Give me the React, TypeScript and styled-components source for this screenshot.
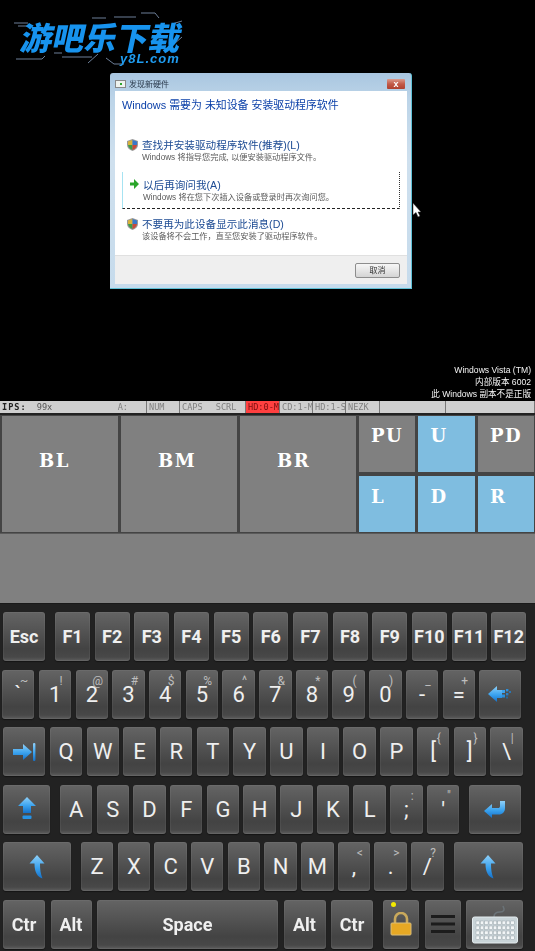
import { styled, createGlobalStyle } from 'styled-components';

const GlobalStyle = createGlobalStyle`
  html, body {
    margin: 0;
    padding: 0;
    background: #000;
  }
  * {
    box-sizing: border-box;
  }
`;

const cjk = `"Liberation Sans", "Noto Sans CJK SC", sans-serif`;

const Page = styled.div`
  width: 535px;
  height: 951px;
  display: flex;
  flex-direction: column;
  overflow: hidden;
  background: #000;
`;

/* ---------- emulated desktop ---------- */

const Desktop = styled.div`
  position: relative;
  height: 401px;
  flex-shrink: 0;
  display: flex;
  justify-content: flex-end;
  align-items: flex-end;
  padding: 0 4px 1px 0;
  background: #000;
`;

const Logo = styled.div`
  position: absolute;
  left: 14px;
  top: 12px;
  width: 176px;
  height: 54px;
  filter: blur(0.4px);
`;

const LogoLines = styled.svg`
  position: absolute;
  left: 0;
  top: 0;
`;

const LogoTitle = styled.div`
  position: absolute;
  left: 8px;
  top: 2px;
  font-family: "Noto Sans CJK SC", sans-serif;
  font-size: 32px;
  line-height: 44px;
  font-weight: 900;
  white-space: nowrap;
  color: #1793ee;
  transform: skewX(-12deg);
`;

const LogoDomain = styled.div`
  position: absolute;
  left: 106px;
  top: 40px;
  font-family: "Liberation Sans", sans-serif;
  font-size: 13px;
  line-height: 13px;
  font-weight: 700;
  font-style: italic;
  letter-spacing: 1px;
  color: #1f9cf0;
`;

const Dialog = styled.div`
  position: absolute;
  left: 110px;
  top: 73px;
  width: 302px;
  height: 216px;
  display: flex;
  flex-direction: column;
  padding: 0 4px 4px 5px;
  background: linear-gradient(180deg, #a9c6e0 0%, #bcd4e8 12%, #cfe0ee 40%, #c6dbec 100%);
  border-right: 1px solid #5fc0d6;
  border-bottom: 1px solid #5fc0d6;
  border-radius: 3px 3px 0 0;
  filter: blur(0.6px);
  font-family: ${cjk};
`;

const TitleBar = styled.div`
  height: 18px;
  flex-shrink: 0;
  display: flex;
  align-items: center;
  padding-top: 3px;
`;

const TitleIcon = styled.div`
  width: 11px;
  height: 8px;
  margin-right: 3px;
  border: 1px solid #888;
  background: #eef2ee;
  display: flex;
  align-items: center;
  justify-content: center;

  &::after {
    content: '';
    width: 2px;
    height: 2px;
    background: #2da52d;
  }
`;

const TitleText = styled.span`
  flex: 1;
  font-size: 8px;
  color: #2b3a4c;
`;

const CloseButton = styled.div`
  width: 18px;
  height: 10px;
  margin-right: 2px;
  border-radius: 1px;
  background: linear-gradient(180deg, #dc9a8c 0%, #c25a48 50%, #b0412f 100%);
  color: #fff;
  font-size: 9px;
  line-height: 10px;
  font-weight: 700;
  text-align: center;
`;

const DialogBody = styled.div`
  flex: 1;
  display: flex;
  flex-direction: column;
  background: #fff;
`;

const Heading = styled.div`
  height: 41px;
  flex-shrink: 0;
  padding: 7px 0 0 7px;
  font-size: 10.9px;
  line-height: 14px;
  color: #0a3fa8;
  white-space: nowrap;
`;

const OptionList = styled.div`
  flex: 1;
  display: flex;
  flex-direction: column;
  gap: 2.5px;
  padding-left: 7px;
`;

const Option = styled.div<{ $focused?: boolean }>`
  width: 278px;
  height: 37px;
  display: flex;
  align-items: flex-start;
  padding: 6px 0 0 ${(p) => (p.$focused ? '7px' : '4px')};
  border-left: 1px solid ${(p) => (p.$focused ? '#a6e3f2' : 'transparent')};
  border-right: 1px dotted ${(p) => (p.$focused ? '#333' : 'transparent')};
  border-bottom: 1px dashed ${(p) => (p.$focused ? '#222' : 'transparent')};
`;

const OptionIcon = styled.svg`
  flex-shrink: 0;
  margin: 1px 4px 0 0;
`;

const OptionText = styled.div`
  display: flex;
  flex-direction: column;
`;

const OptionTitle = styled.div`
  font-size: 10.6px;
  line-height: 14px;
  color: #1b4a93;
  white-space: nowrap;
`;

const OptionSub = styled.div`
  font-size: 8.2px;
  line-height: 12px;
  color: #5a5a5a;
  white-space: nowrap;
`;

const DialogFooter = styled.div`
  height: 29px;
  flex-shrink: 0;
  display: flex;
  justify-content: flex-end;
  align-items: center;
  padding: 0 7px 0 0;
  background: #efefef;
  border-top: 1px solid #e0e0e0;
`;

const CancelButton = styled.div`
  width: 45px;
  height: 15px;
  border: 1px solid #8d8d8d;
  border-radius: 2px;
  background: linear-gradient(180deg, #f6f6f6 0%, #e6e6e6 50%, #d4d4d4 100%);
  font-size: 8px;
  line-height: 13px;
  color: #333;
  text-align: center;
`;

const Cursor = styled.svg`
  position: absolute;
  left: 412px;
  top: 203px;
`;

const Watermark = styled.div`
  display: flex;
  flex-direction: column;
  align-items: flex-end;
  font-family: ${cjk};
  font-size: 8.6px;
  line-height: 12px;
  color: #f4f4f4;
  filter: blur(0.3px);
`;

/* ---------- emulator status bar ---------- */

const StatusBar = styled.div`
  height: 14px;
  flex-shrink: 0;
  display: flex;
  background: #cfcfcf;
  border-bottom: 2px solid #222;
  font-family: "DejaVu Sans Mono", monospace;
  font-size: 8.6px;
  line-height: 12px;
  color: #808080;
  white-space: nowrap;
  filter: blur(0.25px);
`;

const StatusCell = styled.div<{ $w: number; $active?: boolean }>`
  width: ${(p) => p.$w}px;
  flex-shrink: 0;
  display: flex;
  gap: 13px;
  padding: 0 2px;
  overflow: hidden;
  border-right: 1px solid #777;
  background: ${(p) => (p.$active ? '#ff4040' : 'transparent')};
  color: ${(p) => (p.$active ? '#7a1010' : '#808080')};
`;

const StatusStrong = styled.b`
  color: #222;
  letter-spacing: 1px;
`;

const StatusFps = styled.span`
  color: #555;
  margin-left: -3px;
  flex: 1;
`;

const StatusSpacer = styled.span`
  margin-right: 16px;
`;

/* ---------- on screen mouse and arrow pad ---------- */

const PadPanel = styled.div`
  height: 118px;
  flex-shrink: 0;
  display: flex;
  gap: 3px;
  padding: 1px 1px 1px 2px;
  background: #444;
`;

const PadKey = styled.div<{ $blue?: boolean; $big?: boolean; $row2?: boolean }>`
  width: ${(p) => (p.$big ? '116px' : 'auto')};
  background: ${(p) => (p.$blue ? '#7fbde0' : '#808080')};
  padding: ${(p) => (p.$big ? '34px 0 0 37px' : p.$row2 ? '10px 0 0 12px' : '9px 0 0 12px')};
  font-family: "DejaVu Serif", serif;
  font-weight: 700;
  font-size: 18px;
  line-height: 22px;
  letter-spacing: 1.5px;
  color: #fff;
`;

const PadGrid = styled.div`
  flex: 1;
  display: grid;
  grid-template-columns: repeat(3, 1fr);
  grid-template-rows: repeat(2, 1fr);
  gap: 4px 3.4px;
`;

const Filler = styled.div`
  height: 70px;
  flex-shrink: 0;
  background: #808080;
  border-top: 1px solid #5a5a5a;
`;

/* ---------- keyboard ---------- */

const Keyboard = styled.div`
  flex: 1;
  display: flex;
  flex-direction: column;
  gap: 8.5px;
  padding-top: 8px;
  background: #222;
  border-top: 1px solid #1a1a1a;
  filter: blur(0.3px);
`;

const KeyRow = styled.div<{ $gap: number; $left: number }>`
  height: 49px;
  flex-shrink: 0;
  display: flex;
  gap: ${(p) => p.$gap}px;
  padding-left: ${(p) => p.$left}px;
`;

const KeyCap = styled.div<{ $w: number; $ml?: number; $bold?: boolean }>`
  position: relative;
  width: ${(p) => p.$w}px;
  margin-left: ${(p) => p.$ml ?? 0}px;
  flex-shrink: 0;
  display: flex;
  align-items: center;
  justify-content: center;
  border-radius: 3px;
  background: linear-gradient(180deg, #646464 0%, #555 35%, #434343 75%, #484848 92%, #5e5e5e 100%);
  box-shadow: inset 0 0 0 1px rgba(255, 255, 255, 0.05), 0 1px 1px #141414;
  font-family: Roboto, sans-serif;
  font-size: ${(p) => (p.$bold ? 18 : 22)}px;
  font-weight: ${(p) => (p.$bold ? 700 : 400)};
  color: #efefef;
`;

const KeySup = styled.span`
  position: absolute;
  left: 22px;
  top: 3px;
  transform: translateX(-50%);
  font-size: 12px;
  line-height: 16px;
  font-weight: 400;
  color: #bdbdbd;
`;

const KeyDot = styled.span`
  position: absolute;
  left: 8px;
  top: 2px;
  width: 5px;
  height: 5px;
  border-radius: 50%;
  background: #f4ea00;
`;

const BlueDefs = () => (
  <svg width="0" height="0" style={{ position: 'absolute' }}>
    <defs>
      <linearGradient id="keyBlue" x1="0" y1="0" x2="0" y2="1">
        <stop offset="0" stopColor="#8fd0f8" />
        <stop offset="0.55" stopColor="#3aa2ee" />
        <stop offset="1" stopColor="#1570c8" />
      </linearGradient>
    </defs>
  </svg>
);

const TabIcon = () => (
  <svg width="24" height="18" viewBox="0 0 24 18">
    <path d="M1 6h10V1l9 8-9 8v-5H1z" fill="url(#keyBlue)" />
    <rect x="21" y="0" width="2.4" height="18" rx="1" fill="url(#keyBlue)" />
  </svg>
);

const BackIcon = () => (
  <svg width="24" height="18" viewBox="0 0 24 18">
    <path d="M0 9l9-8v4h5v8H9v4z" fill="url(#keyBlue)" />
    <rect x="14" y="5" width="3" height="3" fill="#3aa2ee" />
    <rect x="14" y="9.5" width="3" height="3" fill="#2a8fdc" />
    <rect x="18" y="4" width="2.4" height="2.4" fill="#2f8fd8" />
    <rect x="18" y="8" width="2.4" height="2.4" fill="#2a80c8" />
    <rect x="21" y="6" width="2" height="2" fill="#2a76b4" />
    <rect x="18" y="11.5" width="2" height="2" fill="#25699e" />
  </svg>
);

const CapsIcon = () => (
  <svg width="20" height="24" viewBox="0 0 20 24">
    <path d="M10 0l9 9h-5v7H6V9H1z" fill="url(#keyBlue)" />
    <rect x="5.5" y="18.5" width="9" height="3.4" rx="1" fill="#2793e6" />
  </svg>
);

const EnterIcon = () => (
  <svg width="22" height="18" viewBox="0 0 22 18">
    <path d="M0 11l8-7v4h6c1.4 0 2-.6 2-2V1h5v7c0 4-2.4 6.5-6.4 6.5H8V18z" fill="url(#keyBlue)" />
  </svg>
);

const ShiftIcon = () => (
  <svg width="16" height="24" viewBox="0 0 16 24">
    <path d="M8 0l7.5 8.5H11c0 6 .6 10 2.5 15-5-1.500-8-6-8-15H.5z" fill="url(#keyBlue)" />
  </svg>
);

const LockIcon = () => (
  <svg width="22" height="24" viewBox="0 0 22 24">
    <path d="M5 12V7a6 6 0 0 1 12 0v5" fill="none" stroke="#c9a95c" strokeWidth="2.6" />
    <rect x="1" y="11" width="20" height="12" rx="1" fill="#e6a824" stroke="#d9bd78" />
  </svg>
);

const MenuIcon = () => (
  <svg width="24" height="19" viewBox="0 0 24 19">
    <rect x="0" y="0" width="24" height="3" fill="#1c1c1c" />
    <rect x="0" y="7.500" width="24" height="3" fill="#1c1c1c" />
    <rect x="0" y="15" width="24" height="3" fill="#1c1c1c" />
  </svg>
);

const KeyboardIcon = () => (
  <svg width="46" height="40" viewBox="0 0 46 40">
    <path d="M22 13c0-4 2-5 6-5s5-2 3-6" fill="none" stroke="#6b7378" strokeWidth="1.6" />
    <rect x="0.500" y="13" width="45" height="26" rx="2" fill="#c9d4d8" stroke="#e4ecef" />
    {[17, 22, 27, 32].map((y) =>
      Array.from({ length: 9 }).map((_, i) => (
        <rect key={`${y}-${i}`} x={4 + i * 4.35} y={y} width="3.400" height="3.400" fill="#f2f6f7" stroke="#8f9ba1" strokeWidth="0.4" />
      )),
    )}
  </svg>
);

const ShieldIcon = () => (
  <OptionIcon width="11" height="12" viewBox="0 0 11 12">
    <path d="M5.500 0L11 2v4c0 3-2.500 5-5.500 6C2.500 11 0 9 0 6V2z" fill="#9a9a9a" />
    <path d="M5.500 1v5H1V2.500z" fill="#d8b23a" />
    <path d="M5.500 1l4.500 1.500V6H5.500z" fill="#3a78c8" />
    <path d="M1 6h4.500v5C3 10 1.500 8.500 1 6z" fill="#3f9c48" />
    <path d="M5.500 6H10c-.5 2.500-2 4-4.500 5z" fill="#c94a3a" />
  </OptionIcon>
);

const GreenArrow = () => (
  <OptionIcon width="9" height="10" viewBox="0 0 9 10">
    <path d="M0 3.500h4V0l5 5-5 5V6.500H0z" fill="#2aa52a" />
  </OptionIcon>
);

type KeyDef = { label: string; sup?: string };

const fnKeys = ['F1', 'F2', 'F3', 'F4', 'F5', 'F6', 'F7', 'F8', 'F9', 'F10', 'F11', 'F12'];

const numberRow: KeyDef[] = [
  { label: '1', sup: '!' },
  { label: '2', sup: '@' },
  { label: '3', sup: '#' },
  { label: '4', sup: '$' },
  { label: '5', sup: '%' },
  { label: '6', sup: '^' },
  { label: '7', sup: '&' },
  { label: '8', sup: '*' },
  { label: '9', sup: '(' },
  { label: '0', sup: ')' },
  { label: '-', sup: '_' },
  { label: '=', sup: '+' },
];

const qwertyRow: KeyDef[] = [
  ...'QWERTYUIOP'.split('').map((label) => ({ label })),
  { label: '[', sup: '{' },
  { label: ']', sup: '}' },
  { label: '\\', sup: '|' },
];

const homeRow: KeyDef[] = [
  ...'ASDFGHJKL'.split('').map((label) => ({ label })),
  { label: ';', sup: ':' },
  { label: "'", sup: '"' },
];

const bottomRow: KeyDef[] = [
  ...'ZXCVBNM'.split('').map((label) => ({ label })),
  { label: ',', sup: '<' },
  { label: '.', sup: '>' },
  { label: '/', sup: '?' },
];

const renderKeys = (keys: KeyDef[], firstMargin: number) =>
  keys.map((k, i) => (
    <KeyCap key={k.label} $w={32.4} $ml={i === 0 ? firstMargin : 0}>
      {k.label}
      {k.sup && <KeySup>{k.sup}</KeySup>}
    </KeyCap>
  ));

export default function App() {
  return (
    <Page>
      <GlobalStyle />
      <BlueDefs />
      <Desktop>
        <Logo>
          <LogoLines width="176" height="54" viewBox="0 0 176 54" fill="none" strokeWidth="1">
            <path d="M0 11h14M4 14h12M127 1h14l4 5M100 5h22M78 6h14M158 12l10-3M2 47h26l3-3M40 41h8M48 45h30M74 51l10-9M92 46l8 6h10M160 32l8-7" stroke="#6d7f98" />
          </LogoLines>
          <LogoTitle>游吧乐下载</LogoTitle>
          <LogoDomain>y8L.com</LogoDomain>
        </Logo>
        <Dialog>
          <TitleBar>
            <TitleIcon />
            <TitleText>发现新硬件</TitleText>
            <CloseButton>x</CloseButton>
          </TitleBar>
          <DialogBody>
            <Heading>Windows 需要为 未知设备 安装驱动程序软件</Heading>
            <OptionList>
              <Option>
                <ShieldIcon />
                <OptionText>
                  <OptionTitle>查找并安装驱动程序软件(推荐)(L)</OptionTitle>
                  <OptionSub>Windows 将指导您完成, 以便安装驱动程序文件。</OptionSub>
                </OptionText>
              </Option>
              <Option $focused>
                <GreenArrow />
                <OptionText>
                  <OptionTitle>以后再询问我(A)</OptionTitle>
                  <OptionSub>Windows 将在您下次插入设备或登录时再次询问您。</OptionSub>
                </OptionText>
              </Option>
              <Option>
                <ShieldIcon />
                <OptionText>
                  <OptionTitle>不要再为此设备显示此消息(D)</OptionTitle>
                  <OptionSub>该设备将不会工作，直至您安装了驱动程序软件。</OptionSub>
                </OptionText>
              </Option>
            </OptionList>
            <DialogFooter>
              <CancelButton>取消</CancelButton>
            </DialogFooter>
          </DialogBody>
        </Dialog>
        <Cursor width="9" height="15" viewBox="0 0 9 15">
          <path d="M1 0v12l3-2.500L6 14l2-1-2-4h3z" fill="#fff" stroke="#222" strokeWidth="0.5" />
        </Cursor>
        <Watermark>
          <div>Windows Vista (TM)</div>
          <div>内部版本 6002</div>
          <div>此 Windows 副本不是正版</div>
        </Watermark>
      </Desktop>

      <StatusBar>
        <StatusCell $w={147}>
          <StatusStrong>IPS:</StatusStrong>
          <StatusFps>99x</StatusFps>
          <StatusSpacer>A:</StatusSpacer>
        </StatusCell>
        <StatusCell $w={33}>NUM</StatusCell>
        <StatusCell $w={66}>
          <span>CAPS</span>
          <span>SCRL</span>
        </StatusCell>
        <StatusCell $w={34} $active>HD:0-M</StatusCell>
        <StatusCell $w={33}>CD:1-M</StatusCell>
        <StatusCell $w={33}>HD:1-S</StatusCell>
        <StatusCell $w={34}>NEZK</StatusCell>
        <StatusCell $w={66} />
        <StatusCell $w={89} />
      </StatusBar>

      <PadPanel>
        <PadKey $big>BL</PadKey>
        <PadKey $big>BM</PadKey>
        <PadKey $big>BR</PadKey>
        <PadGrid>
          <PadKey>PU</PadKey>
          <PadKey $blue>U</PadKey>
          <PadKey>PD</PadKey>
          <PadKey $blue $row2>L</PadKey>
          <PadKey $blue $row2>D</PadKey>
          <PadKey $blue $row2>R</PadKey>
        </PadGrid>
      </PadPanel>
      <Filler />

      <Keyboard>
        <KeyRow $gap={4.67} $left={3}>
          <KeyCap $w={42} $bold>Esc</KeyCap>
          {fnKeys.map((f, i) => (
            <KeyCap key={f} $w={35} $ml={i === 0 ? 5.33 : 0} $bold>{f}</KeyCap>
          ))}
        </KeyRow>
        <KeyRow $gap={4.3} $left={2}>
          <KeyCap $w={32}>
            `
            <KeySup>~</KeySup>
          </KeyCap>
          {renderKeys(numberRow, 0.7)}
          <KeyCap $w={42}>
            <BackIcon />
          </KeyCap>
        </KeyRow>
        <KeyRow $gap={4.3} $left={3}>
          <KeyCap $w={42}>
            <TabIcon />
          </KeyCap>
          {renderKeys(qwertyRow, 0.7)}
        </KeyRow>
        <KeyRow $gap={4.3} $left={3}>
          <KeyCap $w={47}>
            <CapsIcon />
          </KeyCap>
          {renderKeys(homeRow, 5.7)}
          <KeyCap $w={52} $ml={5}>
            <EnterIcon />
          </KeyCap>
        </KeyRow>
        <KeyRow $gap={4.3} $left={3}>
          <KeyCap $w={68}>
            <ShiftIcon />
          </KeyCap>
          {renderKeys(bottomRow, 5.7)}
          <KeyCap $w={69} $ml={5.7}>
            <ShiftIcon />
          </KeyCap>
        </KeyRow>
        <KeyRow $gap={5.5} $left={3}>
          <KeyCap $w={42} $bold>Ctr</KeyCap>
          <KeyCap $w={41} $bold>Alt</KeyCap>
          <KeyCap $w={181} $bold>Space</KeyCap>
          <KeyCap $w={42} $bold>Alt</KeyCap>
          <KeyCap $w={42} $bold>Ctr</KeyCap>
          <KeyCap $w={36} $ml={4.5}>
            <KeyDot />
            <LockIcon />
          </KeyCap>
          <KeyCap $w={36}>
            <MenuIcon />
          </KeyCap>
          <KeyCap $w={57}>
            <KeyboardIcon />
          </KeyCap>
        </KeyRow>
      </Keyboard>
    </Page>
  );
}
